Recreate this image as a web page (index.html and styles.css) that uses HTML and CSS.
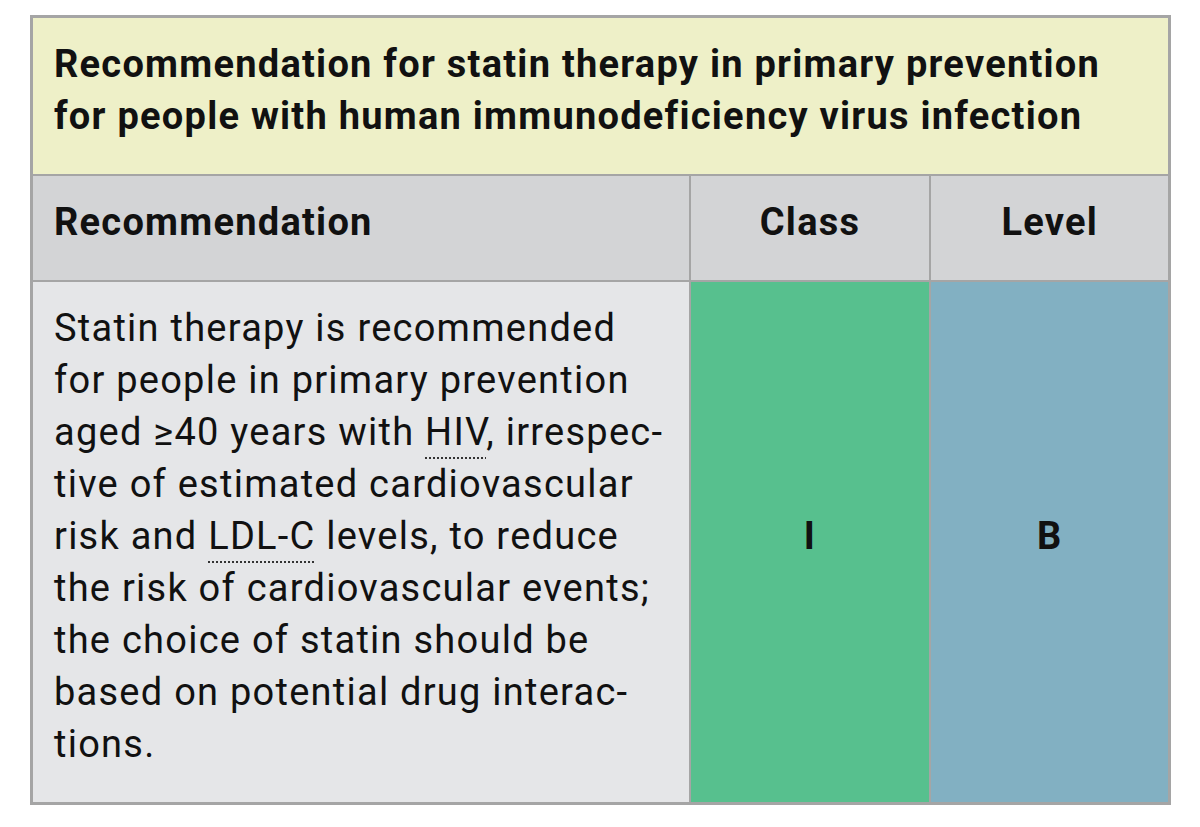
FILE: index.html
```html
<!DOCTYPE html>
<html lang="en">
<head>
<meta charset="utf-8">
<title>Statin therapy in HIV</title>
<link rel="stylesheet" href="styles.css">
</head>
<body>
<table class="rec-table">
  <colgroup>
    <col class="col-rec">
    <col class="col-class">
    <col class="col-level">
  </colgroup>
  <thead>
    <tr>
      <th class="title" colspan="3">Recommendation for statin therapy in primary prevention for people with human immunodeficiency virus infection</th>
    </tr>
    <tr class="head-row">
      <th class="h-rec">Recommendation</th>
      <th class="h-center">Class</th>
      <th class="h-center">Level</th>
    </tr>
  </thead>
  <tbody>
    <tr>
      <td class="rec-text">Statin therapy is recommended for people in primary prevention aged ≥40 years with <abbr class="abbr">HIV</abbr>, irrespec&shy;tive of estimated cardiovascular risk and <abbr class="abbr">LDL-C</abbr> levels, to reduce the risk of cardiovascular events; the choice of statin should be based on potential drug interac&shy;tions.</td>
      <td class="cls-i">I</td>
      <td class="lvl-b">B</td>
    </tr>
  </tbody>
</table>
</body>
</html>
```

FILE: styles.css
```css
html, body {
  margin: 0;
  background: #ffffff;
}

body {
  padding: 15px 30px;
  font-family: Roboto, "Liberation Sans", sans-serif;
  color: #111111;
}

.rec-table {
  width: 1138px;
  border-collapse: collapse;
  table-layout: fixed;
  border: 3px solid #a5a5a5;
}

.col-rec { width: 658px; }
.col-class { width: 240px; }
.col-level { width: 240px; }

.rec-table th,
.rec-table td {
  border: 2px solid #a5a5a5;
  padding: 20px 20px 32px 21px;
  font-size: 38px;
  letter-spacing: 1.25px;
  line-height: 52px;
  vertical-align: middle;
}

.title {
  background: #eef0c8;
  text-align: left;
  font-weight: 700;
}

.head-row th {
  background: #d3d4d6;
  font-weight: 700;
}

.h-rec { text-align: left; }

.h-center {
  text-align: center;
  padding-left: 0;
  padding-right: 0;
}

.rec-text {
  background: #e5e6e8;
  font-weight: 400;
  hyphens: manual;
}

.abbr {
  text-decoration: underline dotted #333333;
  text-decoration-thickness: 2px;
  text-underline-offset: 12px;
}

.cls-i,
.lvl-b {
  text-align: center;
  font-weight: 700;
  padding-left: 0;
  padding-right: 0;
}

.cls-i { background: #57c08e; }
.lvl-b { background: #82b0c2; }
```
